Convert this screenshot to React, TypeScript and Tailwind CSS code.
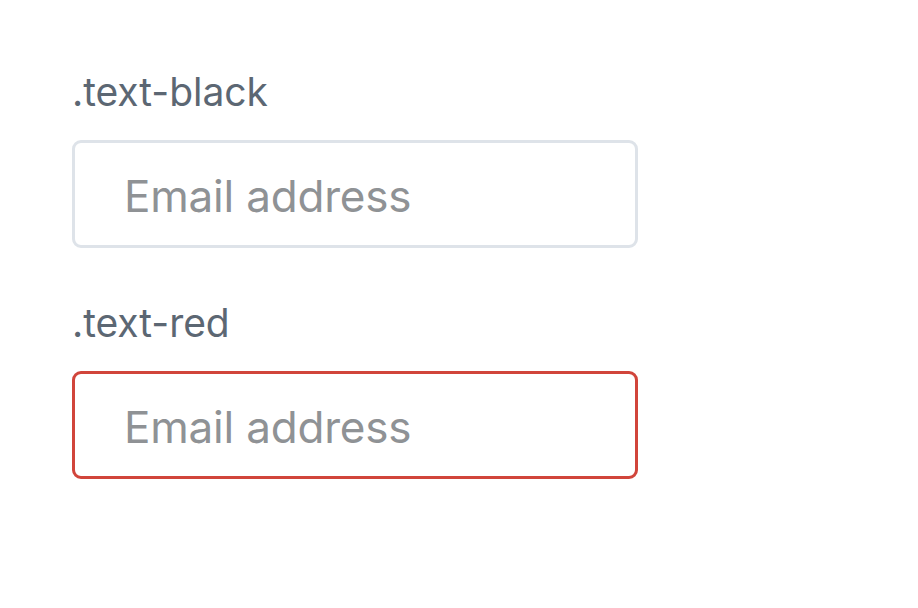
import React from "react";

export default function App() {
  return (
    <div
      className="w-[918px] h-[608px] bg-white pl-[72px] pt-[70px] flex flex-col gap-[53px]"
      style={{ fontFamily: "Inter, 'Noto Sans', sans-serif" }}
    >
      <div className="flex flex-col">
        <label className="text-[39px] leading-[44px] text-[#5c6773] tracking-[-0.05px]">.text-black</label>
        <input
          type="email"
          placeholder="Email address"
          className="mt-[26px] w-[566px] h-[108px] rounded-[9px] border-[3px] border-[#dee3e9] bg-white pl-[49px] pt-[4px] text-[44px] outline-none placeholder:text-[#8f9295] tracking-[-0.2px]"
        />
      </div>
      <div className="flex flex-col">
        <label className="text-[39px] leading-[44px] text-[#5c6773] tracking-[-0.05px]">.text-red</label>
        <input
          type="email"
          placeholder="Email address"
          className="mt-[26px] w-[566px] h-[108px] rounded-[9px] border-[3px] border-[#d1453b] bg-white pl-[49px] pt-[4px] text-[44px] outline-none placeholder:text-[#8f9295] tracking-[-0.2px]"
        />
      </div>
    </div>
  );
}
